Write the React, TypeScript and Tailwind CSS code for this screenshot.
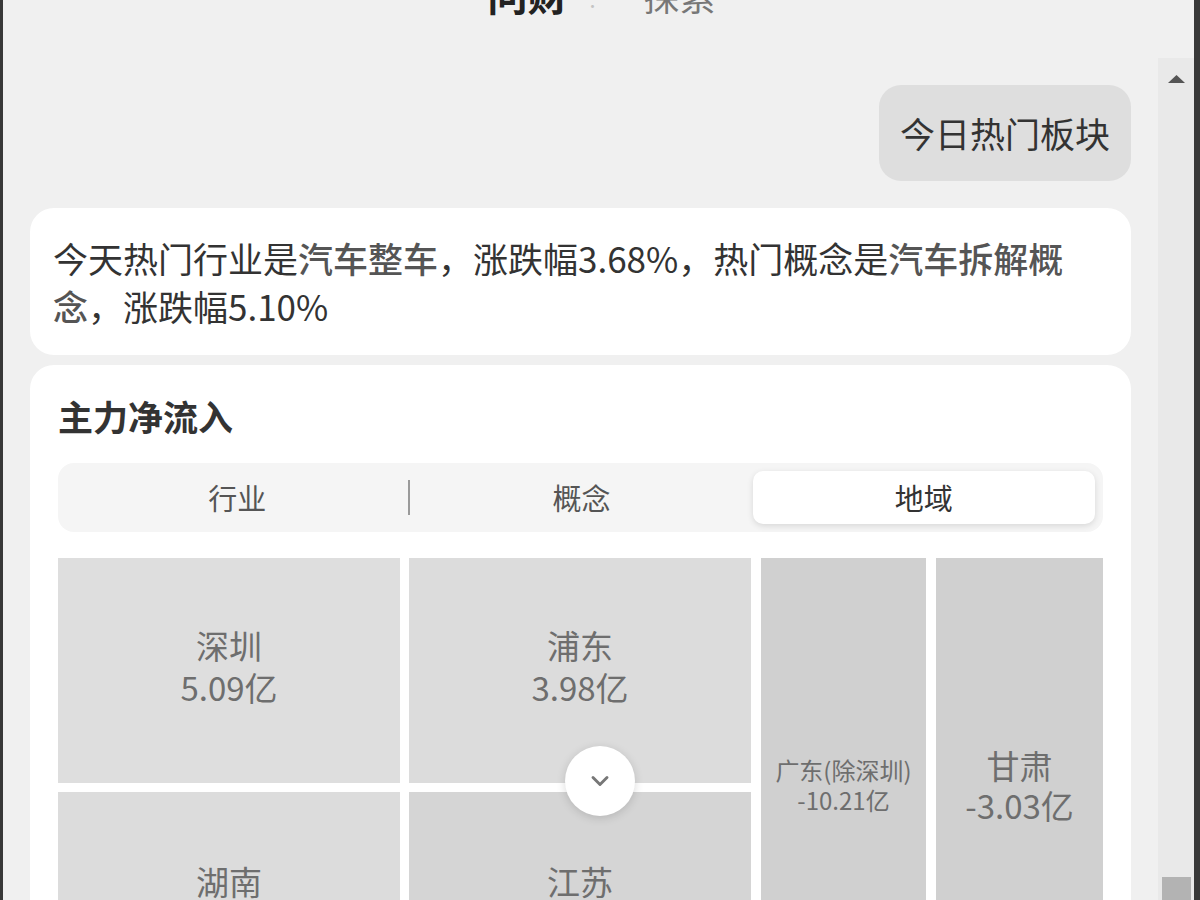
import { ChevronDown } from 'lucide-react';

const font = "font-['Noto_Sans_CJK_SC','Liberation_Sans',sans-serif]";

export default function App() {
  return (
    <div className={`h-[900px] w-[1200px] overflow-hidden flex flex-col bg-[#f0f0f0] border-l-[3px] border-r-[6px] border-[#383838] ${font}`}>
      {/* Header (scrolled partly out of view) */}
      <header className="h-[58px] shrink-0 flex justify-center">
        <div className="-mt-[26px] flex items-baseline gap-[18px] pl-[6px]">
          <span className="text-[40px] leading-none font-bold text-[#222]">问财</span>
          <span className="text-[14px] leading-none text-[#c4c4c4]">·</span>
          <span className="text-[36px] leading-none text-[#777] ml-[26px]">探索</span>
        </div>
      </header>

      <div className="flex-1 flex min-h-0">
        {/* Chat stream */}
        <main className="flex-1 flex flex-col px-[27px] min-w-0">
          <div className="flex justify-end mt-[27px]">
            <div className="bg-[#dedede] rounded-[22px] px-[21px] py-[24px] text-[35px] leading-[48px] text-[#333]">
              今日热门板块
            </div>
          </div>

          <div className="mt-[27px] bg-white rounded-[24px] pl-[23px] pr-[40px] pt-[26px] pb-[25px] text-[35px] leading-[48px] text-[#333]">
            今天热门行业是<span className="font-medium text-[#555]">汽车整车</span>，涨跌幅3.68%，热门概念是
            <span className="font-medium text-[#555]">汽车拆解概念</span>，涨跌幅5.10%
          </div>

          <section className="mt-[10px] bg-white rounded-t-[24px] px-[28px] pt-[27px] pb-[40px]">
            <h2 className="text-[35px] leading-[48px] font-bold text-[#333]">主力净流入</h2>

            <div className="mt-[23px] bg-[#f5f5f5] rounded-[16px] p-[8px] flex items-center h-[69px]">
              <div className="flex-1 flex items-center justify-center text-[29px] text-[#555]">行业</div>
              <div className="w-[2px] h-[35px] bg-[#9a9a9a]" />
              <div className="flex-1 flex items-center justify-center text-[29px] text-[#555]">概念</div>
              <div className="flex-1 h-full flex items-center justify-center text-[29px] text-[#333] bg-white rounded-[10px] shadow-[0_2px_6px_rgba(0,0,0,0.12)]">
                地域
              </div>
            </div>

            {/* Treemap */}
            <div className="relative mt-[26px] h-[454px] flex gap-[9px] text-[#6e6e6e]">
              <div className="w-[342px] flex flex-col gap-[9px]">
                <div className="h-[225px] bg-[#dedede] flex flex-col items-center justify-center text-[33px] leading-[42px]">
                  <span className="-mt-[10px]">深圳</span>
                  <span>5.09亿</span>
                </div>
                <div className="flex-1 bg-[#dcdcdc] flex flex-col items-center justify-center text-[33px] leading-[42px]">
                  <span>湖南</span>
                  <span>2.75亿</span>
                </div>
              </div>
              <div className="w-[342px] flex flex-col gap-[9px]">
                <div className="h-[225px] bg-[#dcdcdc] flex flex-col items-center justify-center text-[33px] leading-[42px]">
                  <span className="-mt-[10px]">浦东</span>
                  <span>3.98亿</span>
                </div>
                <div className="flex-1 bg-[#d5d5d5] flex flex-col items-center justify-center text-[33px] leading-[42px]">
                  <span>江苏</span>
                  <span>2.41亿</span>
                </div>
              </div>
              <div className="w-[165px] ml-[1px] bg-[#d0d0d0] flex flex-col items-center justify-center text-[24px] leading-[30px]">
                <span className="whitespace-nowrap">广东(除深圳)</span>
                <span>-10.21亿</span>
              </div>
              <div className="flex-1 ml-[1px] bg-[#d0d0d0] flex flex-col items-center justify-center text-[33px] leading-[40px]">
                <span>甘肃</span>
                <span>-3.03亿</span>
              </div>

              <button className="absolute left-[507px] top-[188px] w-[70px] h-[70px] rounded-full bg-white shadow-[0_2px_10px_rgba(0,0,0,0.15)] flex items-center justify-center">
                <ChevronDown size={28} strokeWidth={2.5} className="text-[#777]" />
              </button>
            </div>
          </section>
        </main>

        {/* Scrollbar */}
        <aside className="w-[36px] shrink-0 bg-[#e9e9e9] flex flex-col items-center">
          <svg width="17" height="8" viewBox="0 0 17 8" className="mt-[17px]">
            <path d="M8.5 0 L17 8 L0 8 Z" fill="#555" />
          </svg>
          <div className="mt-auto w-[29px] h-[23px] bg-[#b3b3b3]" />
        </aside>
      </div>
    </div>
  );
}
